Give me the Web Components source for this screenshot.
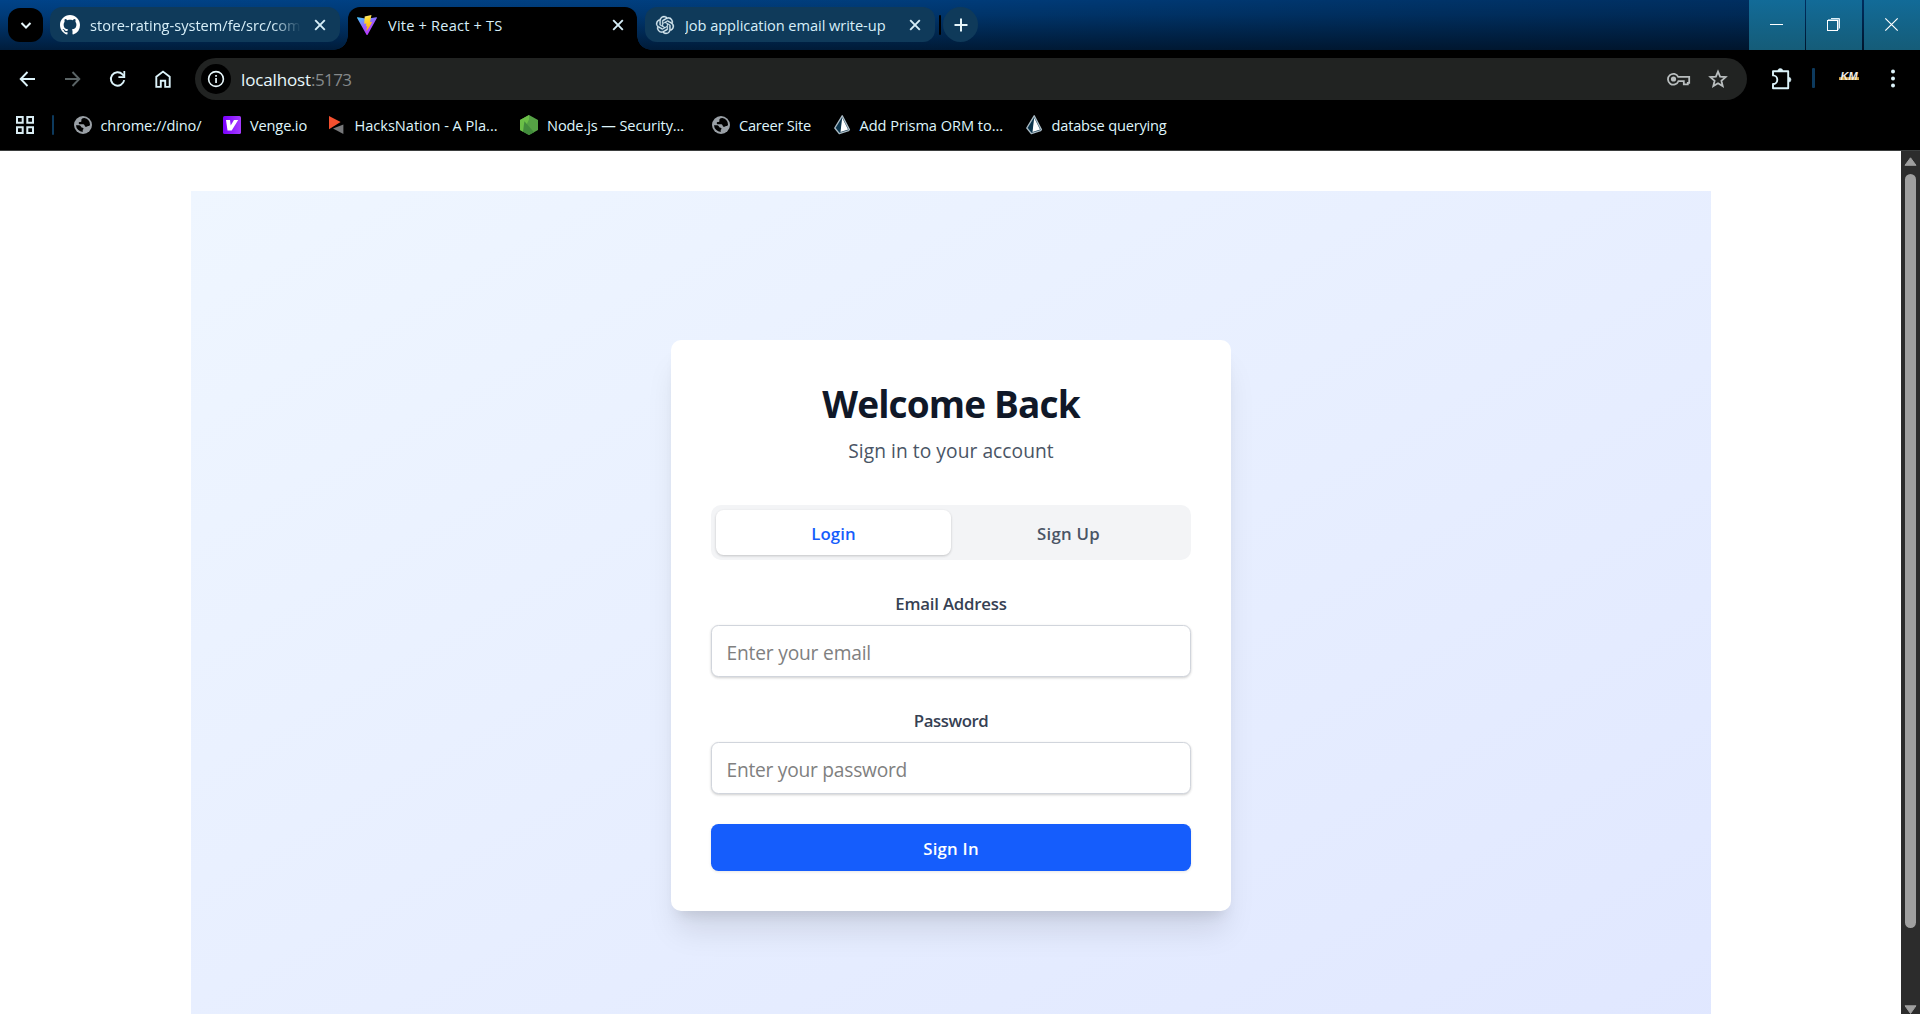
<!DOCTYPE html>
<html lang="en">
<head>
<meta charset="utf-8">
<title>Vite + React + TS</title>
<style>
html,body{margin:0;height:100%;overflow:hidden}
body{font-family:"Open Sans","Noto Sans",sans-serif;background:#000}
</style>
</head>
<body>
<browser-window></browser-window>
<script>
const glyphs = {
  chevron: '<path d="M4.5 7l4.5 4.5L13.5 7" fill="none" stroke="currentColor" stroke-width="2"/>',
  close: '<path d="M4.2 4.2l9.6 9.6M13.8 4.2l-9.6 9.6" stroke="currentColor" stroke-width="1.9"/>',
  plus: '<path d="M9 2.5v13M2.5 9h13" stroke="currentColor" stroke-width="2"/>',
  back: '<path d="M16 9H2M8.5 2L1.7 9l6.8 7" fill="none" stroke="currentColor" stroke-width="1.9"/>',
  forward: '<path d="M1 9h14M8.5 2l6.8 7-6.8 7" fill="none" stroke="currentColor" stroke-width="1.9"/>',
  reload: '<path d="M15.2 10.2A6.7 6.7 0 1 1 13.5 4.4L15.1 6" fill="none" stroke="currentColor" stroke-width="1.9"/><path d="M16.2 1v7H9.4V6.2h5V1z" fill="currentColor"/>',
  home: '<path d="M2.3 16.9V6.8L9 1.6l6.7 5.2v10.1h-4.5v-6.2H6.8v6.2z" fill="none" stroke="currentColor" stroke-width="1.9"/>',
  info: '<circle cx="9" cy="9" r="7.4" fill="none" stroke="currentColor" stroke-width="1.6"/><path d="M8.2 8h1.7v5H8.2zM8.2 5h1.7v1.7H8.2z" fill="currentColor"/>',
  key: '<g fill="none" stroke="currentColor" stroke-width="1.8"><path d="M11.2 4.9h11v6h-1.4v1.4h-4V9.2h-5.4a5.4 5.4 0 1 1-.2-4.3z"/></g><circle cx="6.5" cy="7" r="2.6" fill="currentColor"/>',
  star: '<path d="M9 1.6l2.1 5.1 5.5.4-4.2 3.6 1.3 5.4L9 13.2l-4.7 2.9 1.3-5.4L1.4 7.1l5.5-.4z" fill="none" stroke="currentColor" stroke-width="1.8"/>',
  puzzle: '<path d="M2 3.2h15.2v17H2V16a3.6 3.6 0 0 0 0-8.6z" fill="none" stroke="currentColor" stroke-width="1.9" stroke-linejoin="round"/><path d="M6.8 3a2.5 2.5 0 0 1 5 0zM17.6 9.3a2.4 2.4 0 0 1 0 4.8z" fill="currentColor" stroke="currentColor" stroke-width=".5"/>',
  dots: '<g fill="currentColor"><circle cx="3" cy="2.5" r="2"/><circle cx="3" cy="9.5" r="2"/><circle cx="3" cy="16.5" r="2"/></g>',
  apps: '<path d="M1 1h5.7v5.7H1zM11.3 1H17v5.7h-5.7zM1 11.3h5.7V17H1zM11.3 11.3H17V17h-5.7z" fill="none" stroke="currentColor" stroke-width="2"/>',
  globe: '<circle cx="9" cy="9" r="9" fill="#9aa0a6"/><path d="M10.4 2c-2.8.2-3.3 1.6-3 2.6.3 1-.5 1.5-1.7 1.5-1.2.1-1.4 1.6-.3 2.2h4.1c1.3.4 1 2 2 2.5 1 .4 1.5-.6 2.8-.7 1.2 0 1.7-.9 1.7-1.6A7 7 0 0 0 10.4 2zM2 9.2h3.4c1.6.3 1.4 2.4 3.3 2.6 1.3.3 1 1.6 0 2.1v2A7 7 0 0 1 2 9.2z" fill="#000"/>',
  venge: '<defs><linearGradient id="g"><stop stop-color="#7a00ff"/><stop offset="1" stop-color="#a63cff"/></linearGradient></defs><rect width="18" height="18" rx="1.6" fill="url(#g)"/><path d="M3 4h4l.7 5.6L11 4h4.2L8.7 14.4H4.5z" fill="#fff"/>',
  hacks: '<path d="M0 0v13.2L11.6 6z" fill="#f4502f"/><path d="M14.4 8.4V18L4 12.6z" fill="#77787a"/>',
  node: '<path d="M9 0l9 5v10l-9 5-9-5V5z" fill="#55a145"/><path d="M9 0L0 5v10l3 1.8L9 4.5z" fill="#6bbf47"/><path d="M4.4 6.2L14 17.2 9 20l-6-3.3z" fill="#438c3d"/>',
  prisma: '<path d="M8.2.8L15.4 14.6 14.6 15.6 5.3 18.6.8 13z" fill="#0c344b" stroke="#a9bac4" stroke-width="1.4" stroke-linejoin="round"/><path d="M8.2 2.8l5.9 11.6-7.6 2.5z" fill="#fff"/>',
  github: '<path fill="#fff" d="M8 0C3.58 0 0 3.58 0 8c0 3.54 2.29 6.53 5.47 7.59.4.07.55-.17.55-.38 0-.19-.01-.82-.01-1.49-2.01.37-2.53-.49-2.69-.94-.09-.23-.48-.94-.82-1.13-.28-.15-.68-.52-.01-.53.63-.01 1.08.58 1.23.82.72 1.21 1.87.87 2.33.66.07-.52.28-.87.51-1.07-1.78-.2-3.64-.89-3.64-3.95 0-.87.31-1.59.82-2.15-.08-.2-.36-1.02.08-2.12 0 0 .67-.21 2.2.82.64-.18 1.32-.27 2-.27s1.36.09 2 .27c1.53-1.04 2.2-.82 2.2-.82.44 1.1.16 1.92.08 2.12.51.56.82 1.27.82 2.15 0 3.07-1.87 3.75-3.65 3.95.29.25.54.73.54 1.48 0 1.07-.01 1.93-.01 2.2 0 .21.15.46.55.38A8.01 8.01 0 0 0 16 8c0-4.42-3.58-8-8-8z"/>',
  vite: '<defs><linearGradient id="a" x1="0" y1="0" x2=".6" y2="1"><stop stop-color="#41d1ff"/><stop offset=".55" stop-color="#9a5cff"/><stop offset="1" stop-color="#bd34fe"/></linearGradient><linearGradient id="b" x1=".4" y1="0" x2=".6" y2="1"><stop stop-color="#ffea83"/><stop offset=".2" stop-color="#ffdd35"/><stop offset="1" stop-color="#ffa800"/></linearGradient></defs><path d="M19.9 3.1L10.6 19.7a.6.6 0 0 1-1.1 0L.1 3.1a.6.6 0 0 1 .7-.9L10 3.8l9.2-1.6a.6.6 0 0 1 .7.9z" fill="url(#a)"/><path d="M14.5.1L7.7 1.4l-.5 7.4 2.2-.4-.6 3 1.4-.4-.9 5.2c3.2-3.9 4.7-6.8 5.8-9.4l-2.2.4z" fill="url(#b)"/>',
  gpt: '<path fill="#d8eaf2" stroke="#d8eaf2" stroke-width=".4" d="M22.2819 9.8211a5.9847 5.9847 0 0 0-.5157-4.9108 6.0462 6.0462 0 0 0-6.5098-2.9A6.0651 6.0651 0 0 0 4.9807 4.1818a5.9847 5.9847 0 0 0-3.9977 2.9 6.0462 6.0462 0 0 0 .7427 7.0966 5.98 5.98 0 0 0 .511 4.9107 6.051 6.051 0 0 0 6.5146 2.9001A5.9847 5.9847 0 0 0 13.2599 24a6.0557 6.0557 0 0 0 5.7718-4.2058 5.9894 5.9894 0 0 0 3.9977-2.9001 6.0557 6.0557 0 0 0-.7475-7.073zm-9.022 12.6081a4.4755 4.4755 0 0 1-2.8764-1.0408l.1419-.0804 4.7783-2.7582a.7948.7948 0 0 0 .3927-.6813v-6.7369l2.02 1.1686a.071.071 0 0 1 .038.052v5.5826a4.504 4.504 0 0 1-4.4945 4.4944zm-9.6607-4.1254a4.4708 4.4708 0 0 1-.5346-3.0137l.142.0852 4.783 2.7582a.7712.7712 0 0 0 .7806 0l5.8428-3.3685v2.3324a.0804.0804 0 0 1-.0332.0615L9.74 19.9502a4.4992 4.4992 0 0 1-6.1408-1.6464zM2.3408 7.8956a4.485 4.485 0 0 1 2.3655-1.9728V11.6a.7664.7664 0 0 0 .3879.6765l5.8144 3.3543-2.0201 1.1685a.0757.0757 0 0 1-.071 0l-4.8303-2.7865A4.504 4.504 0 0 1 2.3408 7.872zm16.5963 3.8558L13.1038 8.364 15.1192 7.2a.0757.0757 0 0 1 .071 0l4.8303 2.7913a4.4944 4.4944 0 0 1-.6765 8.1042v-5.6772a.79.79 0 0 0-.407-.667zm2.0107-3.0231l-.142-.0852-4.7735-2.7818a.7759.7759 0 0 0-.7854 0L9.409 9.2297V6.8974a.0662.0662 0 0 1 .0284-.0615l4.8303-2.7866a4.4992 4.4992 0 0 1 6.6802 4.66zM8.3065 12.863l-2.02-1.1638a.0804.0804 0 0 1-.038-.0567V6.0742a4.4992 4.4992 0 0 1 7.3757-3.4537l-.142.0805L8.704 5.459a.7948.7948 0 0 0-.3927.6813zm1.0976-2.3654l2.602-1.4998 2.6069 1.4998v2.9994l-2.5974 1.4997-2.6067-1.4997Z"/>',
  minimize: '<path d="M0 6.5h13" stroke="#fff"/>',
  restore: '<path d="M4 .5h8.5v10" fill="none" stroke="#dff0f8"/><path d="M1 2h10v10" fill="none" stroke="#8fb9cf" stroke-width="2"/><rect x=".5" y="2.5" width="10" height="10" fill="none" stroke="#fff"/>',
  exit: '<path d="M.3.3l12.4 12.4M12.7.3L.3 12.7" stroke="#fff" stroke-width="1.2"/>'
};

function define(name, render, ready) {
  customElements.define(name, class extends HTMLElement {
    connectedCallback() {
      if (this.shadowRoot) return;
      const root = this.attachShadow({ mode: 'open' });
      root.innerHTML = render(this);
      if (ready) ready(this, root);
    }
  });
}
const attr = (el, n, d = '') => el.getAttribute(n) ?? d;

const pen = document.createElement('canvas').getContext('2d');
function tracking(text, style, width) {
  pen.font = `${style.fontWeight} ${style.fontSize} ${style.fontFamily}`;
  return (width - pen.measureText(text).width) / text.length;
}

/* One line of text spaced to a given advance width. */
define('ui-text', el => `<style>:host{display:block;flex:none;white-space:nowrap;width:${attr(el,'w')}px}</style><slot></slot>`,
  el => { el.style.letterSpacing = tracking(el.textContent, getComputedStyle(el), +attr(el,'w')) + 'px'; });

define('ui-icon', el => {
  const w = attr(el,'w','18'), h = attr(el,'h',w), b = attr(el,'box',`0 0 ${w} ${h}`);
  return `<style>:host{display:block;flex:none;width:${w}px;height:${h}px}svg{display:block;overflow:visible}</style>
  <svg width="${w}" height="${h}" viewBox="${b}">${glyphs[attr(el,'name')]}</svg>`;
});

define('browser-tab', el => `<style>
  :host{display:flex;flex:none;align-items:center;box-sizing:border-box;width:290px;height:35px;border-radius:12px;background:#0f3a5a;color:#d6eef8;font-size:14.6px;line-height:35px;padding:0 11px 0 10px}
  :host([active]){position:relative;height:43px;margin:0 8px;width:289px;background:#000;border-radius:12px 12px 0 0;align-items:flex-start;padding-left:9px;padding-right:10px}
  :host([active])::before,:host([active])::after{content:"";position:absolute;bottom:0;width:14px;height:14px}
  :host([active])::before{left:-14px;background:radial-gradient(circle at 0 0,transparent 13.5px,#000 14px)}
  :host([active])::after{right:-14px;background:radial-gradient(circle at 100% 0,transparent 13.5px,#000 14px)}
  .icon{width:20px;height:35px;display:flex;align-items:center;justify-content:center}
  .label{flex:1;overflow:hidden;margin:0 11px 0 10px;padding-top:1px}
  :host([active]) .label{margin-left:11px}
  :host([fade]) .label{-webkit-mask:linear-gradient(90deg,#000 183px,transparent 211px)}
  .x{height:35px;display:flex;align-items:center}
  </style><div class="icon"><slot name="icon"></slot></div><div class="label"><slot></slot></div><div class="x"><ui-icon name="close"></ui-icon></div>`);

define('window-button', () => `<style>:host{display:flex;box-sizing:border-box;width:56px;height:50px;padding-right:1px;padding-bottom:1px;align-items:center;justify-content:center;background:linear-gradient(#126b98,#155c78)}</style><slot></slot>`);

define('tab-strip', () => `<style>
  :host{display:flex;height:50px;box-sizing:border-box;background:linear-gradient(transparent,rgba(0,0,0,.12) 30%,rgba(0,5,12,.62)),linear-gradient(90deg,#004389,#003d7c 45%,#003368 75%,#002c5c)}
  .tabs{display:flex;flex:1;padding:7px 0 0 8px;align-items:flex-start}
  .menu{width:35px;height:34px;border-radius:12px;background:#000;color:#e6f6fa;margin:1px 7px 0 0;display:flex;align-items:center;justify-content:center}
  .sep{width:2.5px;height:20px;border-radius:1px;background:#000;margin:8px 2px 0 3.5px}
  .new{width:35px;height:35px;border-radius:50%;background:#0f3a5a;color:#e6f6fa;display:flex;align-items:center;justify-content:center}
  .win{display:flex;gap:1px}.win :last-child{margin-left:1px}
  .win ui-icon{margin-left:0!important}
  </style>
  <div class="tabs">
    <div class="menu"><ui-icon name="chevron"></ui-icon></div>
    <browser-tab fade><ui-icon slot="icon" name="github" w="20" box="0 0 16 16"></ui-icon><ui-text w="219.5">store-rating-system/fe/src/comp</ui-text></browser-tab>
    <browser-tab active><ui-icon slot="icon" name="vite" w="20"></ui-icon><ui-text w="114.5">Vite + React + TS</ui-text></browser-tab>
    <browser-tab><ui-icon slot="icon" name="gpt" w="18" box="0 0 24 24"></ui-icon><ui-text w="200.5">Job application email write-up</ui-text></browser-tab>
    <div class="sep"></div>
    <div class="new"><ui-icon name="plus"></ui-icon></div>
  </div>
  <div class="win"><window-button><ui-icon name="minimize" w="13"></ui-icon></window-button><window-button><ui-icon name="restore" w="13"></ui-icon></window-button><window-button><ui-icon name="exit" w="13"></ui-icon></window-button></div>`);

define('tool-bar', () => `<style>
  :host{display:flex;box-sizing:border-box;height:58px;padding:8px 0 0 19px;color:#dcf3fa}
  .nav{display:flex;gap:27px;align-items:center;height:42px;width:176px;padding-bottom:1px;box-sizing:border-box}
  .dim{color:#5b6466}
  .url{display:flex;align-items:center;width:1552px;height:42px;box-sizing:border-box;padding:0 20.5px 0 6px;border-radius:21px;background:#212322;font-size:17px;color:#e8f8fc}
  .site{width:30px;height:30px;border-radius:50%;background:#000;display:flex;align-items:center;justify-content:center;margin-right:10px}
  .port{color:#85898a}
  .acts{display:flex;align-items:center;gap:18px;margin-left:auto;color:#b9bebf}
  .ext{display:flex;align-items:center;height:42px;margin-left:24px;padding-bottom:2px;box-sizing:border-box}
  .bar{width:2.5px;height:20px;background:#0d3a5e;border-radius:1px;margin:0 24px 0 21px}
  .km{width:20px;height:12px;padding-left:2px;box-sizing:border-box;margin:-2px 31px 0 0;background:linear-gradient(transparent 54%,#b98a35 54%,#d9b25c 72%,transparent 72%);font:italic 700 11px/11px "Liberation Sans",sans-serif;color:#f1eee6}
  </style>
  <div class="nav"><ui-icon name="back"></ui-icon><ui-icon class="dim" name="forward"></ui-icon><ui-icon name="reload"></ui-icon><ui-icon name="home"></ui-icon></div>
  <div class="url"><div class="site"><ui-icon name="info"></ui-icon></div><ui-text w="70">localhost</ui-text><ui-text class="port" w="40.5">:5173</ui-text>
    <div class="acts"><ui-icon name="key" w="24" h="14"></ui-icon><ui-icon name="star"></ui-icon></div></div>
  <div class="ext"><ui-icon name="puzzle" w="20" h="21"></ui-icon><div class="bar"></div><div class="km"><ui-text w="17">KM</ui-text></div><ui-icon name="dots" w="6" h="19"></ui-icon></div>`);

define('book-mark', el => `<style>:host{display:flex;align-items:center;font-size:14.6px;line-height:20px;color:#dff5fb}.i{width:18px;display:flex;justify-content:center;margin-right:9px}</style><div class="i"><slot name="icon"></slot></div><slot></slot>`);

define('bookmark-bar', () => `<style>
  :host{display:flex;align-items:center;box-sizing:border-box;height:43px;padding:0 0 9px 15.5px;border-bottom:1px solid #3b3e3e;color:#d8ecf2}
  .bar{width:2.5px;height:20px;background:#0d3a5e;border-radius:1px;margin:0 19.5px 0 18px}
  .list{display:flex;gap:21.5px}
  </style><ui-icon name="apps"></ui-icon><div class="bar"></div><div class="list">
  <book-mark><ui-icon slot="icon" name="globe"></ui-icon><ui-text w="101">chrome://dino/</ui-text></book-mark>
  <book-mark><ui-icon slot="icon" name="venge"></ui-icon><ui-text w="57">Venge.io</ui-text></book-mark>
  <book-mark style="margin-left:-1px"><ui-icon slot="icon" name="hacks" w="15" h="18"></ui-icon><ui-text w="143" style="margin-right:1px">HacksNation - A Pla...</ui-text></book-mark>
  <book-mark><ui-icon slot="icon" name="node" w="18" h="20"></ui-icon><ui-text w="137" style="margin-right:6.5px">Node.js — Security...</ui-text></book-mark>
  <book-mark><ui-icon slot="icon" name="globe"></ui-icon><ui-text w="72">Career Site</ui-text></book-mark>
  <book-mark><ui-icon slot="icon" name="prisma" w="16" h="19"></ui-icon><ui-text w="143.5">Add Prisma ORM to...</ui-text></book-mark>
  <book-mark><ui-icon slot="icon" name="prisma" w="16" h="19"></ui-icon><ui-text w="115">databse querying</ui-text></book-mark></div>`);

define('segmented-tabs', () => `<style>
  :host{display:flex;box-sizing:border-box;height:55px;padding:5px;border-radius:10px;background:#f3f4f6;margin-bottom:30px}
  button{flex:1;border:0;background:none;padding:1px 0 0;font:600 16.8px "Open Sans",sans-serif;color:#4a5565;border-radius:7.5px;display:flex;align-items:center;justify-content:center}
  .on{background:#fff;color:#155dfc;box-shadow:0 1px 3px rgba(0,0,0,.1),0 1px 2.5px rgba(0,0,0,.1)}
  </style><button class="on"><ui-text w="44.5">Login</ui-text></button><button><ui-text w="63">Sign Up</ui-text></button>`);

define('form-field', el => `<style>
  :host{display:block;margin-bottom:30px}
  label{display:flex;justify-content:center;font-weight:600;font-size:16.8px;line-height:25px;padding-top:1px;color:#364153;margin-bottom:9px}
  input{display:block;box-sizing:border-box;width:100%;height:52px;border:1px solid #d1d5dc;border-radius:7.5px;padding:2px 14.5px 0;outline:0;background:#fff;font:19.2px "Open Sans",sans-serif;box-shadow:0 1px 3px rgba(0,0,0,.1),0 1px 2.5px rgba(0,0,0,.1)}
  input::placeholder{color:#808080;opacity:1}
  </style><label><ui-text w="${attr(el,'lw')}">${attr(el,'label')}</ui-text></label><input placeholder="${attr(el,'hint')}">`,
  (el, root) => { const i = root.querySelector('input'); i.style.letterSpacing = tracking(i.placeholder, getComputedStyle(i), +attr(el,'hw')) + 'px'; });

define('login-card', () => `<style>
  :host{display:block;box-sizing:border-box;width:560px;padding:40px;border-radius:10px;background:#fff;box-shadow:0 25px 31px -6px rgba(0,0,0,.1),0 10px 12.5px -7.5px rgba(0,0,0,.1)}
  header{display:flex;flex-direction:column;align-items:center;gap:10px;margin-bottom:39px;padding-top:1px}
  h2{margin:0;font-weight:700;font-size:37px;line-height:45px;color:#101828}
  p{margin:0;font-size:19.2px;line-height:30px;color:#4a5565}
  .go{display:flex;width:100%;height:47px;align-items:center;justify-content:center;border:0;border-radius:7.5px;background:#155dfc;color:#fff;font:600 16.8px "Open Sans",sans-serif;padding:1px 0 0;box-shadow:0 1px 3px rgba(0,0,0,.1)}
  </style><header><h2><ui-text w="257.5">Welcome Back</ui-text></h2><p><ui-text w="205.5">Sign in to your account</ui-text></p></header>
  <segmented-tabs></segmented-tabs>
  <form-field label="Email Address" lw="111.5" hint="Enter your email" hw="144.5"></form-field>
  <form-field label="Password" lw="74.5" hint="Enter your password" hw="180.5"></form-field>
  <button class="go"><ui-text w="55.5">Sign In</ui-text></button>`);

define('scroll-bar', () => `<style>
  :host{display:flex;flex-direction:column;align-items:center;width:19px;box-sizing:border-box;height:863px;padding-top:6px;background:#2c2c2c;overflow:hidden}
  .t{flex:none;width:11px;height:754px;border-radius:6px;background:#9f9f9f;margin:8px 0 77px}
  svg{display:block;flex:none}
  </style><svg width="13" height="9"><path d="M6.5.8L12 8.3H1z" fill="#9f9f9f" stroke="#9f9f9f" stroke-linejoin="round"/></svg><div class="t"></div><svg width="13" height="9"><path d="M6.5 8.5L12 .8H1z" fill="#9f9f9f" stroke="#9f9f9f" stroke-linejoin="round"/></svg>`);

define('page-view', () => `<style>
  :host{display:flex;height:863px;background:#fff;overflow:hidden}
  main{flex:1;padding:40px 190px 0 191px}
  .bg{height:869px;display:flex;align-items:center;justify-content:center;background:linear-gradient(to bottom right in oklab,#eff6ff,#e0e7ff)}
  </style><main><div class="bg"><login-card></login-card></div></main><scroll-bar></scroll-bar>`);

define('browser-window', () => `<style>:host{display:block;width:1920px;height:1014px;background:#000;overflow:hidden}</style>
  <tab-strip></tab-strip><tool-bar></tool-bar><bookmark-bar></bookmark-bar><page-view></page-view>`);
</script>
</body>
</html>
